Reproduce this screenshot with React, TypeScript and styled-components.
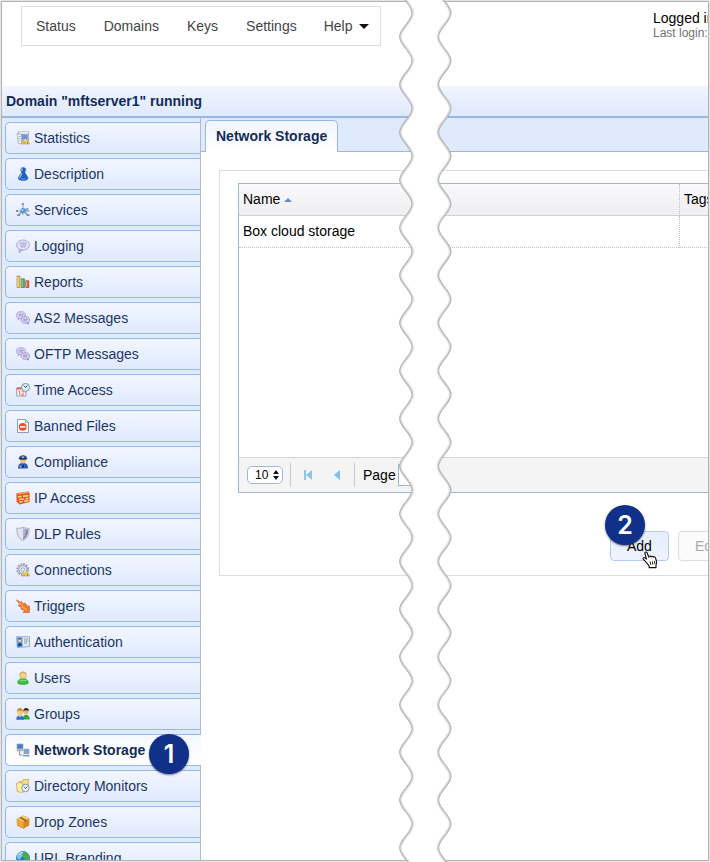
import React from "react";
import styled, { createGlobalStyle, css } from "styled-components";

const GlobalStyle = createGlobalStyle`
  * { box-sizing: border-box; }
  body {
    margin: 0;
    background: #fff;
    color: #000;
    font: 14px/16px "Liberation Sans", Arial, Helvetica, sans-serif;
  }
  a { color: inherit; text-decoration: none; }
  button, input, select { font: inherit; color: inherit; margin: 0; }
`;

const line = "#9ab7e0";

const Stage = styled.div`
  position: relative;
  height: 100vh;
  padding: 1px;
  overflow: hidden;
`;

const Frame = styled.div`
  display: flex;
  flex-direction: column;
  height: 100%;
  border: 1px solid #b4b4b4;
  box-shadow: 0 0 2px rgba(0, 0, 0, 0.35);
  overflow: hidden;
`;

const Header = styled.header`
  display: flex;
  flex: none;
  justify-content: space-between;
  align-items: flex-start;
  height: 84px;
  padding: 4px 0 0 19px;
`;

const Menu = styled.nav`
  display: flex;
  align-items: center;
  height: 40px;
  padding-right: 11px;
  border: 1px solid #ddd;
  color: #444;
`;

const MenuLink = styled.a`
  padding: 0 14px;
`;

const MenuButton = styled.button`
  display: flex;
  align-items: center;
  gap: 7px;
  padding: 0 0 0 13px;
  border: 0;
  background: none;
`;

const Session = styled.div`
  width: 55px;
  padding-top: 4px;
  white-space: nowrap;
`;

const LastLogin = styled.div`
  color: #707070;
  font-size: 12px;
  line-height: 14px;
`;

const DomainBar = styled.h1`
  flex: none;
  height: 32px;
  margin: 0;
  padding: 0 4px;
  border-bottom: 2px solid ${line};
  background: linear-gradient(#f1f5fe, #dfe9fe);
  color: #152c57;
  font-size: 14px;
  line-height: 30px;
`;

const Columns = styled.div`
  display: flex;
  flex: 1;
  min-height: 0;
`;

const Sidebar = styled.nav`
  flex: none;
  width: 199px;
  border-right: 1px solid #b0bccd;
  background: #deebfe;
`;

const NavList = styled.ul`
  display: flex;
  flex-direction: column;
  gap: 4px;
  margin: 0;
  padding: 4px 0 0 3px;
  list-style: none;
`;

const NavItem = styled.li`
  position: relative;
`;

const NavLink = styled.a<{ $active?: boolean }>`
  display: flex;
  align-items: center;
  gap: 4px;
  height: 32px;
  padding-left: 10px;
  border: 1px solid ${line};
  border-right: 0;
  border-radius: 5px 0 0 5px;
  background: linear-gradient(#f1f5ff, #e0eafe);
  color: #1c3664;
  ${(p) =>
    p.$active &&
    css`
      margin-right: -1px;
      background: linear-gradient(#f4f8ff, #fff);
      color: #152c57;
      font-weight: bold;
    `}
`;

const Badge = styled.span<{ $left: number; $top: number }>`
  position: absolute;
  z-index: 1;
  left: ${(p) => p.$left}px;
  top: ${(p) => p.$top}px;
  width: 40px;
  height: 40px;
  border-radius: 50%;
  background: #10308a;
  box-shadow: 0 1px 2px rgba(0, 0, 0, 0.5);
  color: #fff;
  font-family: Inter, "Liberation Sans", sans-serif;
  font-size: 25px;
  font-weight: 600;
  line-height: 40px;
  text-align: center;
`;

const Main = styled.main`
  flex: 1;
  min-width: 0;
  overflow: hidden;
`;

const TabStrip = styled.div`
  display: flex;
  align-items: flex-end;
  height: 34px;
  padding-left: 4px;
  background: #e0eafd;
  box-shadow: inset 0 -1px ${line};
`;

const Tab = styled.button`
  height: 32px;
  padding: 0 10px 2px;
  border: 1px solid ${line};
  border-bottom: 0;
  border-radius: 5px 5px 0 0;
  background: linear-gradient(#f1f5ff, #fff);
  color: #152c57;
  font-weight: bold;
`;

const Panel = styled.section`
  width: 640px;
  margin: 18px 0 0 18px;
  padding: 12px 18px 14px;
  border: 1px solid #ddd;
`;

const Grid = styled.div`
  border: 1px solid ${line};
`;

const GridBody = styled.div`
  min-height: 273px;
`;

const Table = styled.table`
  width: 100%;
  border-collapse: separate;
  border-spacing: 0;
  table-layout: fixed;

  th, td {
    height: 32px;
    padding: 0 4px 2px;
    text-align: left;
    font-weight: normal;
  }
  th {
    border-bottom: 1px solid #d0d0d0;
    background: linear-gradient(#f9f9fb, #efeef1);
  }
  td { border-bottom: 1px dotted #c4c4c4; }
  th:first-child, td:first-child { width: 440px; }
  th + th, td + td { border-left: 1px dotted #c0c0c0; }
`;

const SortArrow = styled.svg`
  margin-left: 4px;
  vertical-align: middle;
`;

const Pager = styled.div`
  display: flex;
  align-items: center;
  height: 35px;
  padding-left: 8px;
  border-top: 1px solid #d4d4d4;
  background: #f4f4f4;
`;

const SizePicker = styled.label`
  position: relative;
  display: block;
  width: 36px;
  height: 18px;
`;

const SizeSelect = styled.select`
  appearance: none;
  display: block;
  width: 100%;
  height: 100%;
  padding: 0 0 0 7px;
  border: 1px solid #9db8e0;
  border-radius: 5px;
  background: #fff;
  font-size: 12px;
  line-height: 16px;
`;

const SizeArrows = styled.svg`
  position: absolute;
  top: 4px;
  right: 4px;
  pointer-events: none;
`;

const Divider = styled.span`
  width: 1px;
  height: 24px;
  margin: 0 7px;
  background: #c8c8c8;
`;

const PageButton = styled.button`
  display: flex;
  align-items: center;
  justify-content: center;
  width: 20px;
  height: 20px;
  padding: 0;
  border: 0;
  background: none;
`;

const PageButtons = styled.div`
  display: flex;
  gap: 9px;
`;

const PageField = styled.label`
  display: flex;
  align-items: center;
  gap: 2px;
  padding-left: 1px;
`;

const PageInput = styled.input`
  width: 32px;
  height: 22px;
  padding: 0 4px;
  border: 1px solid ${line};
  background: #fff;
`;

const Actions = styled.div`
  display: flex;
  gap: 9px;
  margin-top: 38px;
  padding-left: 372px;
`;

const ActionSlot = styled.div`
  position: relative;
`;

const ActionButton = styled.button<{ $primary?: boolean }>`
  height: 30px;
  padding: 0 16px;
  border: 1px solid ${(p) => (p.$primary ? "#b3cbec" : "#ddd")};
  border-radius: 4px;
  background: ${(p) => (p.$primary ? "linear-gradient(#e6eefd, #eef3fe)" : "#fbfbfb")};
  color: ${(p) => (p.$primary ? "#000" : "#aaa")};
`;

const Hand = styled.svg`
  position: absolute;
  left: 32px;
  top: 20px;
  z-index: 2;
`;

const TearSvg = styled.svg`
  position: absolute;
  top: 0;
  left: 398px;
  width: 56px;
  height: 100%;
  pointer-events: none;
`;

const half = 23.85;
const crest = 13 - half * 2;
const count = 100;
const swing = 6.2;

/* Half-period curves of a torn edge, drawn downwards or back upwards. */
function edge(center: number, up = false) {
  const k = half * 0.364;
  const at = (i: number) => center + (i % 2 ? -swing : swing);
  let d = `${at(up ? count : 0)} ${crest + (up ? count : 0) * half}`;
  for (let n = 0; n < count; n++) {
    const from = up ? count - n : n;
    const to = up ? from - 1 : from + 1;
    const y0 = crest + from * half;
    const y1 = crest + to * half;
    const s = up ? -k : k;
    d += `C${at(from)} ${y0 + s} ${at(to)} ${y1 - s} ${at(to)} ${y1}`;
  }
  return d;
}

function Tear() {
  const left = `M${edge(7.8)}`;
  const right = `M${edge(46.8)}`;
  const gap = `${left}L${edge(46.8, true)}Z`;
  return (
    <TearSvg aria-hidden="true">
      <defs>
        <clipPath id="gap"><path d={gap} /></clipPath>
      </defs>
      <path d={gap} fill="#fff" />
      <g fill="none" stroke="#000" clipPath="url(#gap)">
        <g strokeOpacity=".06" strokeWidth="5">
          <path d={left} />
          <path d={right} />
        </g>
        <g strokeOpacity=".1" strokeWidth="3">
          <path d={left} />
          <path d={right} />
        </g>
      </g>
      <g fill="none" stroke="#b3b3b3" strokeWidth="1.1">
        <path d={left} />
        <path d={right} />
      </g>
    </TearSvg>
  );
}

const warning = (
  <>
    <path d="M5.3 13l2-3.600 2 1.400 1.700-2.500L13.800 13z" fill="#f9dc4c" stroke="#b5933a" strokeWidth=".6" />
    <path d="M7.300 12.500l.7-1.500.9 1.500zM10.400 12.500l.9-1.800 1.100 1.800z" fill="#7d6540" />
    <path d="M8.400 10.400l1-2.200 1.200 1.200" fill="none" stroke="#fff4c0" strokeWidth=".9" />
  </>
);

const bubbles = (
  <>
    <ellipse cx="5" cy="4.2" rx="4.4" ry="3.5" fill="#dcd8f5" stroke="#9d95cc" strokeWidth=".8" />
    <path d="M2.6 3.3h5M2.6 5h4.4" stroke="#8f87c2" strokeWidth=".8" />
    <path d="M1.8 7l-.2 2.4 2.4-1.7z" fill="#a9a2d4" />
    <ellipse cx="9.3" cy="9" rx="4.1" ry="3.3" fill="#e0dcf8" stroke="#9088c2" strokeWidth=".8" />
    <path d="M7 8.2h4.8M7 9.9h4" stroke="#8078b6" strokeWidth=".8" />
    <path d="M10.4 12l2.4 1.8-.2-2.8z" fill="#9088c2" />
  </>
);

const icons: Record<string, React.ReactNode> = {
  statistics: (
    <>
      <path d="M2.500.8h10v9.500H2.500z" fill="#b9c3d8" stroke="#8b95ac" strokeWidth=".6" />
      <path d="M3 1h9.200v1.600H3z" fill="#eef1f8" />
      <path d="M5.500 3.500h6v5h-6z" fill="#6f94d8" />
      <path d="M1 2.600l4.500.9v9.500L2 12z" fill="#f0f2f6" stroke="#9298a8" strokeWidth=".6" />
      <path d="M2 5.300l2.600.4M2 7.300l2.600.4M2.400 9.400l2.200.4" stroke="#98a1b5" strokeWidth=".7" />
      {warning}
    </>
  ),
  description: (
    <>
      <path d="M7.300.4c2.100 0 3 1.800 2.200 3.300-.4.800-.9 1-.6 1.800.5 1.700 3 3.800 3.100 5.700 0 1.700-2.200 2.300-4.800 2.300s-4.900-.6-4.900-2.300c0-1.900 2.700-3.900 3.200-5.700.2-.8-.3-1-.7-1.800C4.200 2.200 5.200.4 7.300.4z" fill="#2460c0" stroke="#1a4898" strokeWidth=".4" />
      <path d="M6.300 1.300c-1.200.5-.9 2.200.2 2.400M6 6.300c-.5 2-2.300 3.200-2.500 4.800" fill="none" stroke="#84bdf8" strokeWidth="1.300" />
      <path d="M5 11.800c1.400.5 3.400.5 4.800 0" stroke="#5f9cec" fill="none" />
    </>
  ),
  services: (
    <>
      <path d="M6.800.5v11M.6 7.800h12.600M2 12.600l5-5 5 4.800M7 7l5.500-1.500" stroke="#939cab" strokeWidth="1.500" fill="none" />
      <path d="M6.600 1v5M1 7.500h5" stroke="#e4e8ee" strokeWidth=".7" />
      <path d="M1 11.500h3v1.600H1zM10.600 11.200h3v1.700h-3zM0 7h2v2H0zM5.800 0h2v2h-2z" fill="#848e9e" />
      <circle cx="7" cy="7.600" r="2.500" fill="#429bea" />
      <circle cx="6.500" cy="7" r="1" fill="#a9dcff" />
    </>
  ),
  logging: (
    <>
      <path d="M3.500 10l-.6 3.600 4-2.800" fill="#c9c4ea" stroke="#9e97ca" strokeWidth=".8" />
      <ellipse cx="7" cy="6" rx="6.400" ry="5" fill="#e6e3fa" stroke="#a59ed0" strokeWidth=".9" />
      <path d="M3.600 4.100h6.800M3.600 6h6.800M4.600 7.900h4.800" stroke="#938bc4" strokeWidth=".8" />
    </>
  ),
  reports: (
    <>
      <path d="M1 1h3v11.500H1z" fill="#edbf55" stroke="#a8813e" strokeWidth=".7" />
      <path d="M5.400 3.800h3v8.700h-3z" fill="#45b45d" stroke="#2c853c" strokeWidth=".7" />
      <path d="M9.800 5.800h3v6.700h-3z" fill="#e66050" stroke="#a93529" strokeWidth=".7" />
      <path d="M1.800 2v10M6.200 4.500V12M10.600 6.500V12" stroke="#fff" strokeOpacity=".6" strokeWidth=".8" />
    </>
  ),
  messages: bubbles,
  time: (
    <>
      <path d="M.8 5h9v8h-9z" fill="#fff" stroke="#8b78a8" strokeWidth=".8" />
      <path d="M.8 4.500h7v2h-7z" fill="#df6545" />
      <path d="M2.400 8h1.400v4M5.500 8h2.300v1.600L5.500 12H8" fill="none" stroke="#ec5a2a" strokeWidth=".9" />
      <circle cx="9.500" cy="4.400" r="4" fill="#dff3fb" stroke="#6d8fa7" strokeWidth=".9" />
      <path d="M7.700 2.500l1.800 2 1.800-2" fill="none" stroke="#25415d" strokeWidth=".9" />
    </>
  ),
  banned: (
    <>
      <path d="M1.500.5h8l3 3v10h-11z" fill="#fafcff" stroke="#77869d" strokeWidth=".8" />
      <path d="M9.500.5v3h3z" fill="#d3dcea" stroke="#77869d" strokeWidth=".6" />
      <circle cx="6.700" cy="7.800" r="3.900" fill="#e6512b" />
      <path d="M4 7h5.400v1.600H4z" fill="#fff" />
    </>
  ),
  compliance: (
    <>
      <path d="M2 13.500c0-3.600 1.400-5.400 5-5.400s5 1.800 5 5.400z" fill="#2c62bd" />
      <circle cx="7" cy="5.500" r="2.900" fill="#f5c37c" />
      <path d="M2.700 3.600C2.600 1.500 5 .2 7 .2s4.400 1.300 4.300 3.400L10.200 4.600H3.800z" fill="#2c5096" />
      <path d="M3.800 4.100h6.400" stroke="#142a58" strokeWidth=".9" />
      <circle cx="7" cy="2.200" r=".9" fill="#ffd55a" />
      <path d="M7 8.700l-1 3 1 1.200 1-1.200z" fill="#112651" />
      <path d="M3.500 11.300h1.800" stroke="#ffd55a" />
    </>
  ),
  ip: (
    <>
      <path d="M.4 2.200L12.600.5l1 2v8.600l-10 2.300L.6 10.700z" fill="#de5a1c" />
      <path d="M.4 2.200L12.600.5l1 1.200-10.400 1.800z" fill="#ff9c58" />
      <path d="M2 5.800l3.500-.3M7 5.300l5.400-.5M3 8.500l5-.4M9.400 7.800l3-.3M3.500 11l3-.4M8 10.300l4.500-.7" stroke="#ffe0a0" strokeWidth="1.400" />
    </>
  ),
  shield: (
    <>
      <path d="M.8 1.300c2.300.5 4.100-.4 6.200-.9 2.100.5 3.900 1.400 6.200.9-.1 5.800-1.400 9.800-6.200 12.300C2.200 11.100.9 7.100.8 1.300z" fill="#e4e4f1" stroke="#9494ac" strokeWidth=".7" />
      <path d="M7 1.500c1.900.7 3.300 1 5.200.9-.2 4.700-1.400 7.800-5.200 10.100z" fill="#8686ab" />
      <path d="M7 1.500c1.300.5 2 .7 3 .8-.2 4-1 7-3 9z" fill="#b2b2cf" />
    </>
  ),
  gear: (
    <>
      <circle cx="6.800" cy="6.500" r="5.400" fill="none" stroke="#9297b3" strokeWidth="2" strokeDasharray="1.700 1.100" />
      <circle cx="6.800" cy="6.500" r="4" fill="#e3e6f2" stroke="#a1a6c0" strokeWidth="1.200" />
      <circle cx="6.800" cy="6.500" r="1.700" fill="#f5f7ff" stroke="#8b91a9" strokeWidth=".8" />
      {warning}
    </>
  ),
  trigger: (
    <>
      <path d="M.3.8l4.300 2.500.4-1 3.300 3.200.5-1.700 3 3.500 1.700-.5v6.700H7l1.500-2L4.800 10l1-1.300L2 6.600l1.600-1.200z" fill="#f27a2c" stroke="#cf4c1c" strokeWidth=".5" />
      <path d="M3 3.500l3.500 3M6 7.500l5 3.500" stroke="#ffb45a" strokeWidth="1.200" />
    </>
  ),
  auth: (
    <>
      <path d="M.5 1.700h13v9.800L1.400 12.600z" fill="#e2eaf6" stroke="#8b9eb9" strokeWidth=".8" />
      <path d="M1 2.200h5.500v9.200L1.200 12z" fill="#5aa1e6" />
      <circle cx="3.800" cy="5.400" r="1.600" fill="#f8ce8c" />
      <path d="M2.200 4.600c.2-2.300 3-2.300 3.400 0z" fill="#7a5a36" />
      <path d="M1.500 11.500c0-5 4.700-5 4.700-.4z" fill="#204a94" />
      <path d="M8 4h4.500M8 6h4.500M8 8h3" stroke="#8795a8" strokeWidth=".9" />
    </>
  ),
  user: (
    <>
      <path d="M1.800 12.200C1.700 8.600 4 7.700 7 7.700s5.300.9 5.200 4.500c-2 1.700-8.400 1.700-10.400 0z" fill="#3cc040" stroke="#2a9030" strokeWidth=".6" />
      <circle cx="7" cy="4.300" r="3.300" fill="#f7d68e" stroke="#be954c" strokeWidth=".6" />
      <path d="M3.700 4C3.500-.8 10.500-.8 10.300 4 9 1.800 5 1.800 3.700 4z" fill="#d9ac58" />
      <path d="M4 10c1-.9 4.400-1 6-.3" stroke="#8fe98b" fill="none" />
    </>
  ),
  group: (
    <>
      <path d="M6.500 12.500c0-6.500 7.300-6.500 7.300 0z" fill="#2ba840" />
      <circle cx="10" cy="4.600" r="2.800" fill="#e9b878" />
      <path d="M7.200 4.400c0-4.400 5.700-4.600 5.900-.4l-1-.6-4 .2z" fill="#2b2b2b" />
      <path d="M.2 12.800c0-6 7.800-6 7.800 0z" fill="#2e6dc6" />
      <circle cx="4" cy="5.400" r="2.900" fill="#f7ca79" />
      <path d="M1 5c-.3-5.200 6.200-5.200 5.900 0L6 3.700 2 3.800z" fill="#c58a2c" />
      <path d="M2.700 8.500L4 10.200l1.300-1.700" fill="#fff" />
    </>
  ),
  network: (
    <>
      <path d="M.7.700h6.600v6H.7z" fill="#8b95af" />
      <path d="M1.600 1.600h4.800V5H1.600z" fill="#4676d0" />
      <path d="M1 7.500h6" stroke="#a4aabd" strokeWidth="1.300" />
      <path d="M3.500 8v4h3" fill="none" stroke="#858fa4" />
      <path d="M7.500 5.800h5.800v5.400H7.500z" fill="#97a1b7" />
      <path d="M8.400 6.700h4v3.200h-4z" fill="#6aa8ed" />
      <path d="M7 12.700h6.500" stroke="#8d95a7" strokeWidth="1.500" />
    </>
  ),
  directory: (
    <>
      <path d="M3.500 2.500l3-.2.800-1.600 5-.3v10H3.500z" fill="#f8dd80" stroke="#c2963a" strokeWidth=".7" />
      <path d="M.4 4.300l4-.9L7 5v8.500l-5.600-.8z" fill="#fff0ac" stroke="#cfa344" strokeWidth=".8" />
      <circle cx="9.500" cy="9" r="3.800" fill="#e6f3fb" stroke="#7c8e9b" strokeWidth=".9" />
      <path d="M8 7.700l1.500 1.800 2-2" fill="none" stroke="#31536c" strokeWidth=".9" />
    </>
  ),
  drop: (
    <>
      <path d="M1 4l6.300-3.300L13 3.500v6.700l-5.500 3.200L1.400 10.700z" fill="#f0a832" stroke="#bd7d20" strokeWidth=".5" />
      <path d="M1 4l6.300-3.300L13 3.500 7.300 6.700z" fill="#ffd06c" />
      <path d="M7.300 6.700L13 3.500v6.700l-5.500 3.200z" fill="#d58c22" />
      <path d="M3 3l2-1 5.600 2.700v1.800L8.800 7.600V5.900z" fill="#a06a24" />
    </>
  ),
  globe: (
    <>
      <circle cx="7" cy="7" r="6.500" fill="#2c77c8" stroke="#2a5785" strokeWidth=".6" />
      <path d="M1 4.500C3 1 6 .5 7.500 1L6.300 3l1 1.500L5 6.500 3.500 9 1 7z" fill="#7cc8ec" />
      <path d="M7 1l3 .6 3 3.400.2 3-2 3.200-2-.8-.5-3L6.500 5.500z" fill="#43b04a" />
      <path d="M2.500 4C4 1.800 5.500 1.500 7 1.500" fill="none" stroke="#c6efff" strokeWidth=".9" />
    </>
  ),
};

const navItems: { label: string; icon: string; step?: string }[] = [
  { label: "Statistics", icon: "statistics" },
  { label: "Description", icon: "description" },
  { label: "Services", icon: "services" },
  { label: "Logging", icon: "logging" },
  { label: "Reports", icon: "reports" },
  { label: "AS2 Messages", icon: "messages" },
  { label: "OFTP Messages", icon: "messages" },
  { label: "Time Access", icon: "time" },
  { label: "Banned Files", icon: "banned" },
  { label: "Compliance", icon: "compliance" },
  { label: "IP Access", icon: "ip" },
  { label: "DLP Rules", icon: "shield" },
  { label: "Connections", icon: "gear" },
  { label: "Triggers", icon: "trigger" },
  { label: "Authentication", icon: "auth" },
  { label: "Users", icon: "user" },
  { label: "Groups", icon: "group" },
  { label: "Network Storage", icon: "network", step: "1" },
  { label: "Directory Monitors", icon: "directory" },
  { label: "Drop Zones", icon: "drop" },
  { label: "URL Branding", icon: "globe" },
];

export default function App() {
  return (
    <Stage>
      <GlobalStyle />
      <Frame>
        <Header>
          <Menu>
            {["Status", "Domains", "Keys", "Settings"].map((m) => (
              <MenuLink key={m} href="#">{m}</MenuLink>
            ))}
            <MenuButton type="button">
              Help
              <svg width="10" height="5" aria-hidden="true"><path d="M0 0h10L5 5z" fill="#111" /></svg>
            </MenuButton>
          </Menu>
          <Session>
            <div>Logged in</div>
            <LastLogin>Last login:</LastLogin>
          </Session>
        </Header>
        <DomainBar>Domain "mftserver1" running</DomainBar>
        <Columns>
          <Sidebar aria-label="Domain">
            <NavList>
              {navItems.map((n) => (
                <NavItem key={n.label}>
                  <NavLink href="#" $active={!!n.step} aria-current={n.step ? "page" : undefined}>
                    <svg width="14" height="14" viewBox="0 0 14 14" aria-hidden="true">{icons[n.icon]}</svg>
                    {n.label}
                  </NavLink>
                  {n.step && <Badge $left={144} $top={0}>{n.step}</Badge>}
                </NavItem>
              ))}
            </NavList>
          </Sidebar>
          <Main>
            <TabStrip role="tablist">
              <Tab type="button" role="tab" aria-selected="true">Network Storage</Tab>
            </TabStrip>
            <Panel>
              <Grid>
                <GridBody>
                  <Table>
                    <thead>
                      <tr>
                        <th>
                          Name
                          <SortArrow width="8" height="4" aria-hidden="true"><path d="M0 4L4 0l4 4z" fill="#5c92d2" /></SortArrow>
                        </th>
                        <th>Tags</th>
                      </tr>
                    </thead>
                    <tbody>
                      <tr>
                        <td>Box cloud storage</td>
                        <td />
                      </tr>
                    </tbody>
                  </Table>
                </GridBody>
                <Pager>
                  <SizePicker>
                    <SizeSelect aria-label="Rows per page" defaultValue="10">
                      <option>10</option>
                      <option>25</option>
                    </SizeSelect>
                    <SizeArrows width="6" height="10" aria-hidden="true">
                      <path d="M0 4l3-4 3 4zM0 6h6l-3 4z" fill="#111" />
                    </SizeArrows>
                  </SizePicker>
                  <Divider />
                  <PageButtons>
                    <PageButton type="button" aria-label="First page">
                      <svg width="10" height="10"><path d="M1 0h2v10H1zM9 0v10L3 5z" fill="#8fc1ea" /></svg>
                    </PageButton>
                    <PageButton type="button" aria-label="Previous page">
                      <svg width="8" height="10"><path d="M7 0v10L1 5z" fill="#7fbdf0" /></svg>
                    </PageButton>
                  </PageButtons>
                  <Divider />
                  <PageField>
                    Page
                    <PageInput type="text" defaultValue="" />
                  </PageField>
                </Pager>
              </Grid>
              <Actions>
                <ActionSlot>
                  <ActionButton type="button" $primary>Add</ActionButton>
                  <Badge $left={-5} $top={-26}>2</Badge>
                  <Hand width="16" height="18" viewBox="0 0 16 18" aria-hidden="true">
                    <path
                      d="M4.200 11.300L1.300 8.200c-.8-1 .6-2.200 1.700-1.300l1.500 1.300L2.900 2.500C2.600 1 4.500.4 5.100 1.800l1.700 4.400c.1-1.400 1.900-1.600 2.300-.2.400-1 1.900-1 2.200.2.500-.8 1.800-.6 2.100.4l1 3.400c.4 1.700-.1 2.900-.4 4.200v2.400H7.100v-1.800z"
                      fill="#fff"
                      stroke="#111"
                      strokeWidth="1.100"
                      strokeLinejoin="round"
                    />
                    <path d="M8 10.500l.8 3.300M10.300 10.300l.6 3.300M12.400 9.900l.5 3.300" stroke="#111" strokeWidth=".9" />
                  </Hand>
                </ActionSlot>
                <ActionButton type="button" disabled>Edit</ActionButton>
              </Actions>
            </Panel>
          </Main>
        </Columns>
      </Frame>
      <Tear />
    </Stage>
  );
}
